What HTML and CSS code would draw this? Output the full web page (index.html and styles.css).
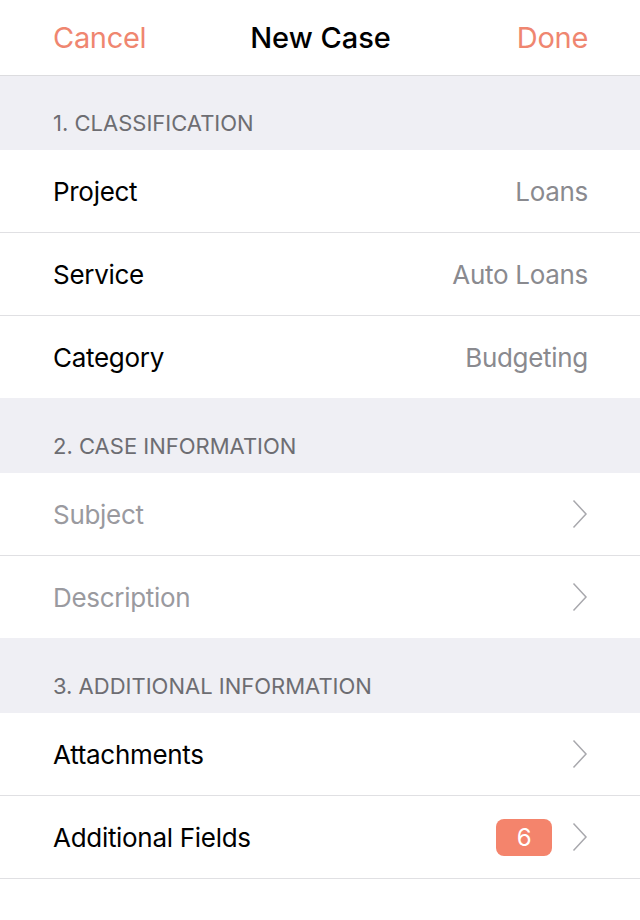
FILE: index.html
```html
<!DOCTYPE html>
<html lang="en">
<head>
    <meta charset="UTF-8">
    <meta name="viewport" content="width=device-width, initial-scale=1.0">
    <title>New Case</title>
    <link rel="stylesheet" href="styles.css">
</head>
<body>
    <div class="navbar">
        <span class="nav-btn">Cancel</span>
        <span class="nav-title">New Case</span>
        <span class="nav-btn done">Done</span>
    </div>

    <div class="section-header">1. CLASSIFICATION</div>
    <div class="row">
        <span class="label">Project</span>
        <span class="value">Loans</span>
    </div>
    <div class="row">
        <span class="label">Service</span>
        <span class="value">Auto Loans</span>
    </div>
    <div class="row">
        <span class="label">Category</span>
        <span class="value">Budgeting</span>
    </div>

    <div class="section-header">2. CASE INFORMATION</div>
    <div class="row">
        <span class="label placeholder">Subject</span>
        <svg class="chevron" viewBox="0 0 16 30"><path d="M1.5 1.5 L14 15 L1.5 28.5"/></svg>
    </div>
    <div class="row">
        <span class="label placeholder">Description</span>
        <svg class="chevron" viewBox="0 0 16 30"><path d="M1.5 1.5 L14 15 L1.5 28.5"/></svg>
    </div>

    <div class="section-header">3. ADDITIONAL INFORMATION</div>
    <div class="row">
        <span class="label">Attachments</span>
        <svg class="chevron" viewBox="0 0 16 30"><path d="M1.5 1.5 L14 15 L1.5 28.5"/></svg>
    </div>
    <div class="row">
        <span class="label">Additional Fields</span>
        <span class="badge">6</span>
        <svg class="chevron" viewBox="0 0 16 30"><path d="M1.5 1.5 L14 15 L1.5 28.5"/></svg>
    </div>
</body>
</html>
```

FILE: styles.css
```css
body {
    font-family: Inter, 'Noto Sans', sans-serif;
    margin: 0;
    padding: 0;
    background: #fff;
    color: #000;
}

.navbar {
    height: 75px;
    border-bottom: 1px solid #dcdcdf;
    display: grid;
    grid-template-columns: 1fr auto 1fr;
    align-items: center;
    padding: 0 52px 0 53px;
}

.nav-btn {
    color: #ef8670;
    font-size: 29px;
    letter-spacing: -0.3px;
}

.nav-btn.done {
    text-align: right;
}

.nav-title {
    font-size: 29px;
    font-weight: 500;
    letter-spacing: 0;
}

.section-header {
    height: 74px;
    box-sizing: border-box;
    background: #efeff4;
    color: #6d6d72;
    font-size: 22px;
    padding: 0 53px 14px;
    display: flex;
    align-items: flex-end;
    letter-spacing: 0;
}

.row {
    height: 82px;
    border-bottom: 1px solid #e0e0e3;
    display: flex;
    align-items: center;
    padding: 0 52px 0 53px;
    font-size: 26px;
    letter-spacing: -0.3px;
}

.row:has(+ .section-header) {
    border-bottom-color: #efeff4;
}

.label {
    flex: 1;
}

.placeholder {
    color: #9a9a9f;
}

.value {
    color: #8a8a8f;
}

.badge {
    background: #f4846c;
    color: #fff;
    border-radius: 8px;
    width: 56px;
    height: 37px;
    display: flex;
    align-items: center;
    justify-content: center;
    font-size: 24px;
    margin-right: 20px;
}

.chevron {
    width: 16px;
    height: 30px;
    fill: none;
    stroke: #a8a8ad;
    stroke-width: 1.5;
}
```
